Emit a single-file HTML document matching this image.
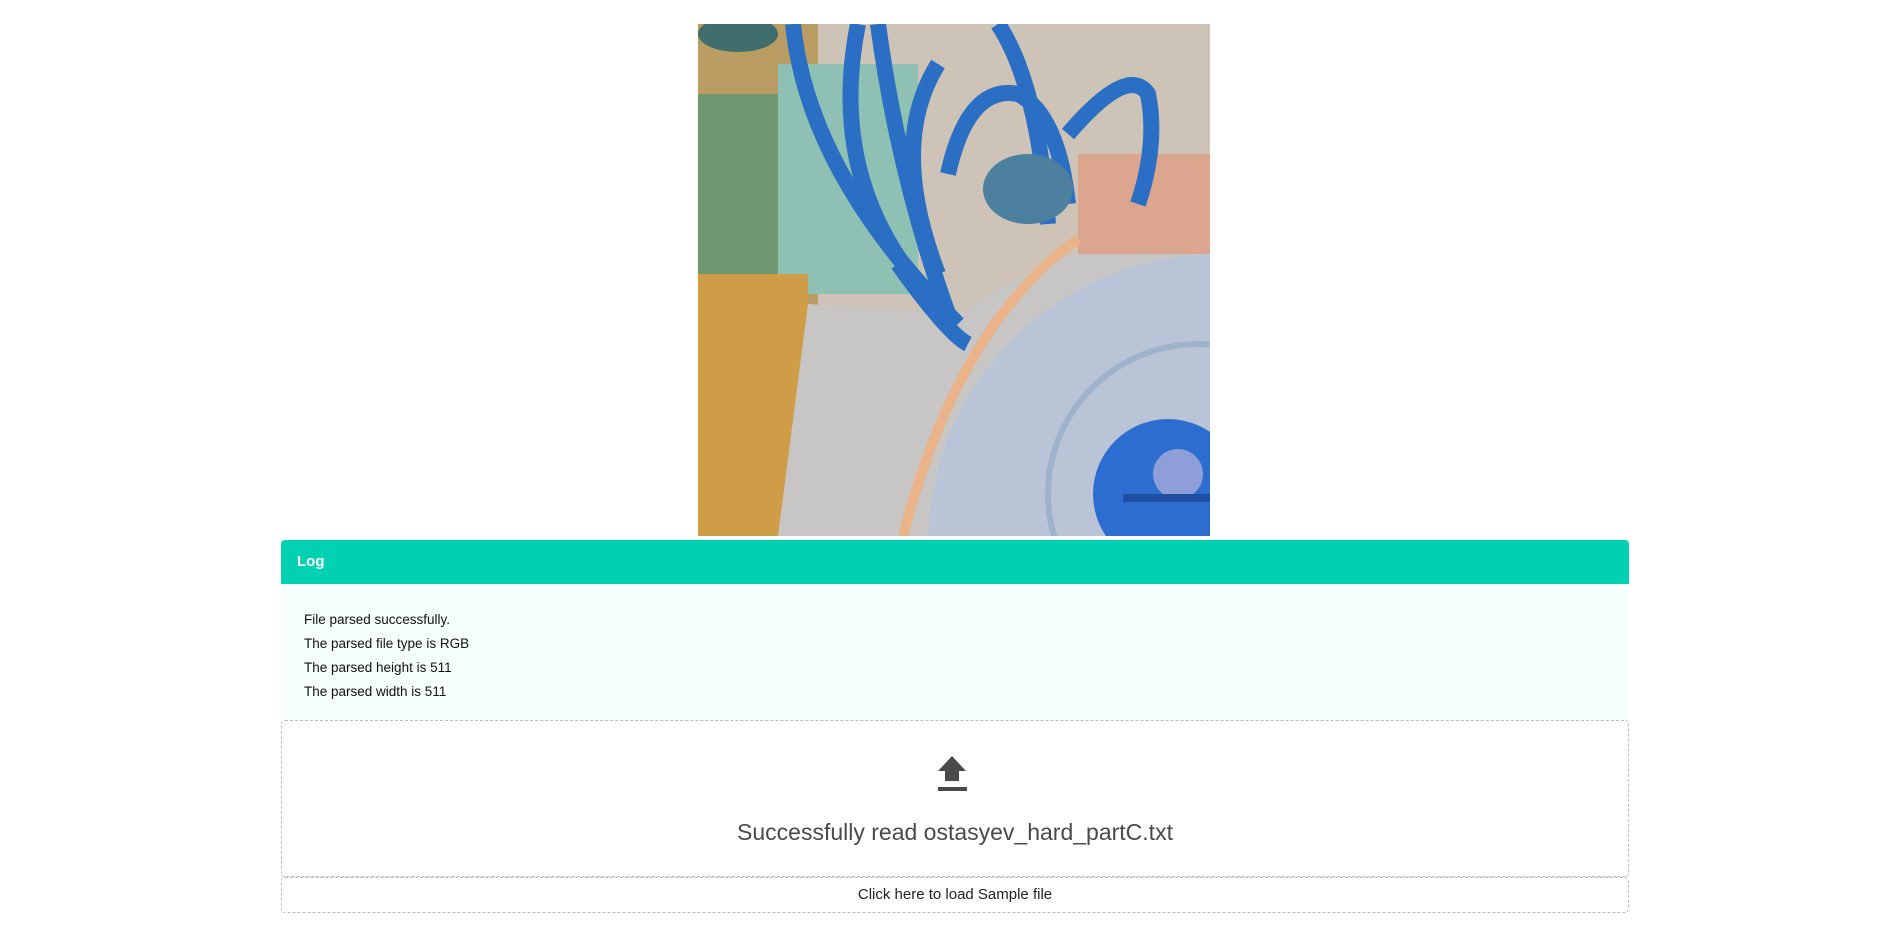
<!DOCTYPE html>
<html><head><meta charset="utf-8"><style>
body{margin:0;background:#fff;font-family:"Segoe UI","Liberation Sans",sans-serif;width:1903px;height:938px;overflow:hidden;position:relative}
.img{position:absolute;left:698px;top:24px;width:512px;height:512px}
.hdr{position:absolute;left:281px;top:540px;width:1348px;height:44px;background:#00d1b2;border-radius:4px 4px 0 0;color:#fff;font-weight:bold;font-size:15px;line-height:44px;box-sizing:border-box;padding-left:16px}
.body{position:absolute;left:281px;top:584px;width:1348px;height:136px;background:#f5fffd;box-sizing:border-box;padding:24px 0 0 23px;font-size:13.5px;line-height:24px;color:#111}
.drop{position:absolute;left:281px;top:720px;width:1348px;height:157px;box-sizing:border-box;border:1px dashed #bbb;border-radius:4px;text-align:center}
.drop .t{position:absolute;left:0;right:0;top:98px;font-size:23px;color:#4a4a4a}
.btn{position:absolute;left:281px;top:877px;width:1348px;height:36px;box-sizing:border-box;border:1px dashed #bbb;border-radius:4px;text-align:center;font-size:15px;line-height:34px;color:#222}
</style></head><body>
<svg class="img" viewBox="0 0 512 512">
<rect width="512" height="512" fill="#cdc3b6"/>
<rect x="0" y="0" width="120" height="512" fill="#b99d62"/>
<rect x="0" y="70" width="110" height="180" fill="#6f9870"/>
<rect x="80" y="40" width="140" height="230" fill="#8fc0b4"/>
<ellipse cx="40" cy="10" rx="40" ry="18" fill="#3f6e6c"/>
<rect x="0" y="250" width="110" height="262" fill="#cf9d48"/>
<rect x="380" y="130" width="132" height="100" fill="#dba58e"/>
<polygon points="110,280 260,290 360,230 512,230 512,512 80,512" fill="#c8c6c4"/>
<circle cx="520" cy="520" r="290" fill="#b9c5d6"/>
<circle cx="500" cy="470" r="150" fill="none" stroke="#9eb2cc" stroke-width="6"/>
<circle cx="470" cy="470" r="75" fill="#2e6dd0"/>
<circle cx="480" cy="450" r="25" fill="#8e9ed8"/>
<rect x="425" y="470" width="90" height="8" fill="#1d4fa0"/>
<path d="M380,215 Q260,300 205,512" stroke="#eab38a" stroke-width="10" fill="none"/>
<g fill="none" stroke="#2a6fc3" stroke-width="16">
<path d="M95,0 Q110,150 260,300"/>
<path d="M160,0 Q130,150 220,260"/>
<path d="M180,0 Q200,150 250,290"/>
<path d="M240,40 Q190,120 240,250"/>
<path d="M300,0 Q340,60 350,200"/>
<path d="M250,150 Q270,60 320,70 Q360,90 370,180"/>
<path d="M370,110 Q430,40 450,70 Q460,120 440,180"/>
<path d="M200,240 Q250,310 270,320"/>
</g>
<ellipse cx="330" cy="165" rx="45" ry="35" fill="#4d7f9e"/>
</svg>
<div class="hdr">Log</div>
<div class="body">File parsed successfully.<br>The parsed file type is RGB<br>The parsed height is 511<br>The parsed width is 511</div>
<div class="drop">
<svg style="position:absolute;left:655px;top:34px" width="30" height="38" viewBox="0 0 30 38"><polygon points="15,1 29,16 22,16 22,26 8,26 8,16 1,16" fill="#4a4a4a"/><rect x="1" y="32" width="29" height="4" fill="#4a4a4a"/></svg>
<div class="t">Successfully read ostasyev_hard_partC.txt</div>
</div>
<div class="btn">Click here to load Sample file</div>
</body></html>
